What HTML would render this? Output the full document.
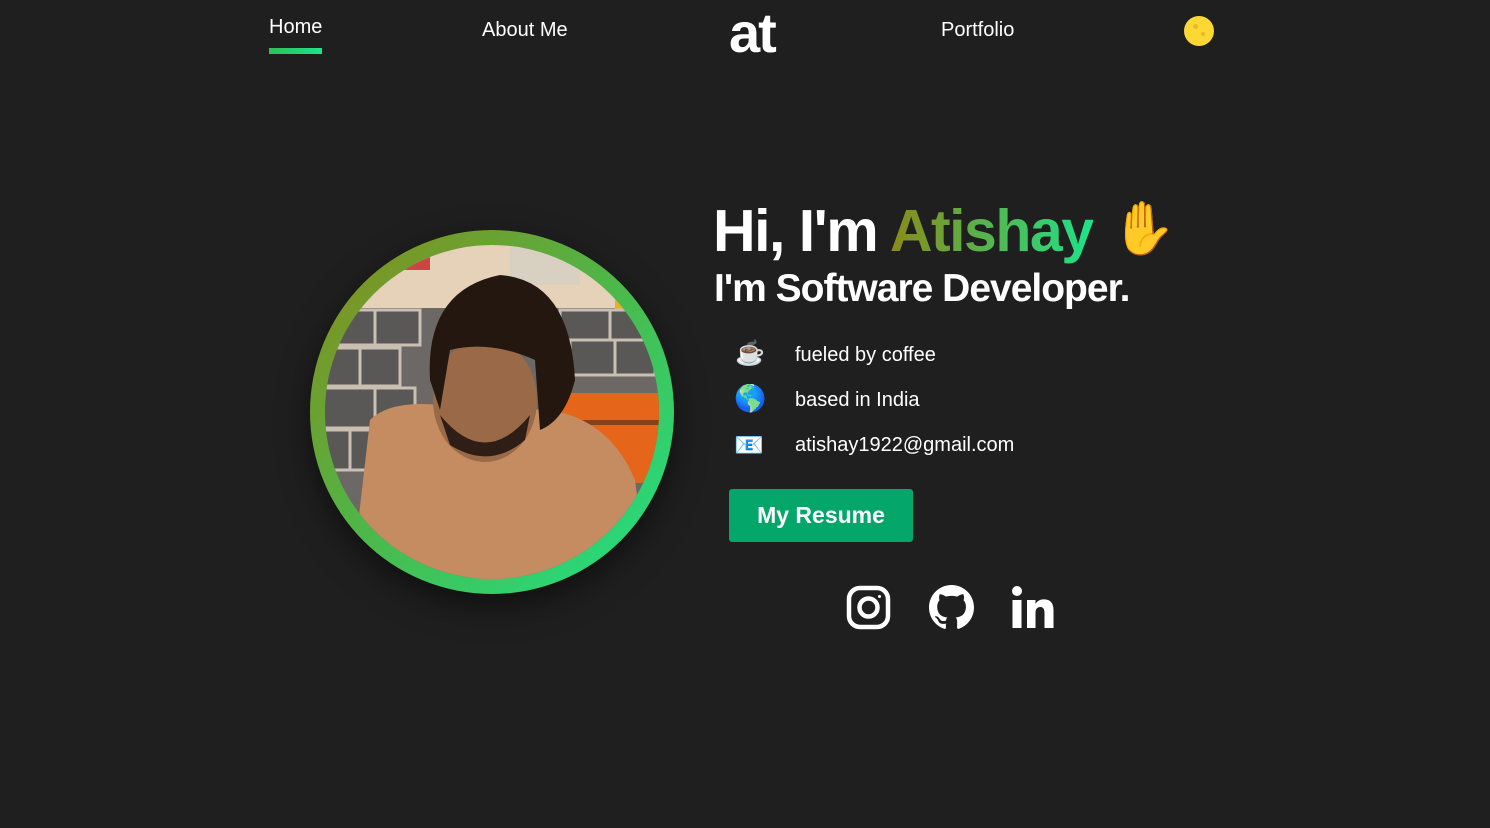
<!DOCTYPE html>
<html><head><meta charset="utf-8"><style>
*{margin:0;padding:0;box-sizing:border-box}
body{width:1490px;height:828px;background:#1f1f1f;font-family:"Liberation Sans",Roboto,sans-serif;color:#fff;position:relative;overflow:hidden}
.a{position:absolute;white-space:nowrap}
.nav{font-size:20px}
</style></head><body>
<div class="a nav" style="left:269px;top:16px">Home</div>
<div class="a" style="left:269px;top:48px;width:53px;height:6px;background:linear-gradient(90deg,#2fbf5a,#1de38a)"></div>
<div class="a nav" style="left:482px;top:19px">About Me</div>
<div class="a" style="left:729px;top:3px;font-size:56px;font-weight:bold;letter-spacing:-2px;line-height:60px">at</div>
<div class="a nav" style="left:941px;top:19px">Portfolio</div>
<div class="a" style="left:1184px;top:16px;width:30px;height:30px;border-radius:50%;background:#fdd835"><div style="position:absolute;left:9px;top:8px;width:5px;height:5px;border-radius:50%;background:#e8b923"></div><div style="position:absolute;left:17px;top:16px;width:4px;height:4px;border-radius:50%;background:#e8b923"></div></div>

<svg class="a" style="left:300px;top:220px;filter:drop-shadow(0 12px 16px rgba(0,0,0,.5))" width="384" height="384" viewBox="-10 -10 384 384">
<defs>
<linearGradient id="r" x1="0" y1="0" x2="1" y2="1"><stop offset="0" stop-color="#8a8a18"/><stop offset=".5" stop-color="#4cb84a"/><stop offset="1" stop-color="#1de38a"/></linearGradient>
<clipPath id="c"><circle cx="182" cy="182" r="167"/></clipPath>
</defs>
<circle cx="182" cy="182" r="182" fill="url(#r)"/>
<g clip-path="url(#c)">
<rect width="364" height="364" fill="#6b6866"/>
<rect width="364" height="78" fill="#e6d2b8"/>
<rect x="60" y="15" width="60" height="25" fill="#c44"/>
<rect x="200" y="15" width="70" height="40" fill="#d8d0c0"/>
<rect x="305" y="70" width="15" height="20" fill="#e8b020"/>
<g fill="#5a5856" stroke="#c9bfb3" stroke-width="3">
<rect x="10" y="80" width="55" height="35"/><rect x="65" y="80" width="45" height="35"/><rect x="250" y="80" width="50" height="35"/><rect x="300" y="80" width="50" height="35"/>
<rect x="10" y="118" width="40" height="38"/><rect x="50" y="118" width="40" height="38"/><rect x="260" y="110" width="45" height="35"/><rect x="305" y="110" width="40" height="35"/>
<rect x="10" y="158" width="55" height="40"/><rect x="65" y="158" width="40" height="40"/>
<rect x="10" y="200" width="30" height="40"/><rect x="40" y="200" width="30" height="40"/>
</g>
<rect x="250" y="163" width="120" height="90" fill="#e5661b"/>
<rect x="250" y="190" width="120" height="5" fill="#8a4015"/>
<path d="M60 190 Q80 170 130 175 L240 180 Q300 190 325 250 L340 364 L40 364 Z" fill="#c48c60"/>
<ellipse cx="175" cy="170" rx="52" ry="62" fill="#9a6a48"/>
<path d="M120 150 Q115 60 190 45 Q260 50 265 150 Q255 190 230 200 L225 130 Q180 110 140 120 L130 180 Z" fill="#24170f"/>
<path d="M130 185 Q175 240 220 185 L215 210 Q180 240 140 215 Z" fill="#2e1e16"/>
</g>
</svg>

<div class="a" style="left:713px;top:192px;font-size:59px;font-weight:bold;line-height:78px;letter-spacing:-1.5px">Hi, I'm <span style="background:linear-gradient(90deg,#8a8a18,#1de38a);-webkit-background-clip:text;background-clip:text;color:transparent">Atishay</span></div>
<div class="a" style="left:1111px;top:194px;font-size:52px;line-height:70px">✋</div>
<div class="a" style="left:714px;top:267px;font-size:39px;font-weight:bold;letter-spacing:-1px">I'm Software Developer.</div>

<div class="a" style="left:735px;top:339px;font-size:24px">☕</div>
<div class="a" style="left:795px;top:344px;font-size:20px">fueled by coffee</div>
<div class="a" style="left:734px;top:383px;font-size:26px">🌎</div>
<div class="a" style="left:795px;top:389px;font-size:20px">based in India</div>
<div class="a" style="left:734px;top:431px;font-size:24px">📧</div>
<div class="a" style="left:795px;top:434px;font-size:20px">atishay1922@gmail.com</div>

<div class="a" style="left:729px;top:489px;width:184px;height:53px;background:#04a66a;border-radius:3px;font-size:23px;font-weight:bold;text-align:center;line-height:53px">My Resume</div>

<svg class="a" style="left:846px;top:585px" width="45" height="45" viewBox="0 0 45 45" fill="none" stroke="#fff" stroke-width="4.5"><rect x="3" y="3" width="39" height="39" rx="11"/><circle cx="22.5" cy="22.5" r="9"/><circle cx="33.5" cy="11.5" r="1.5" fill="#fff" stroke="none"/></svg>
<svg class="a" style="left:929px;top:585px" width="45" height="45" viewBox="0 0 16 16"><path fill="#fff" d="M8 0C3.580 0 0 3.58 0 8c0 3.54 2.29 6.53 5.47 7.59.4.07.55-.17.55-.38 0-.19-.01-.82-.01-1.49-2.010.37-2.53-.49-2.69-.94-.09-.23-.48-.94-.82-1.13-.28-.15-.68-.52-.01-.53.63-.01 1.08.58 1.23.82.72 1.21 1.87.87 2.33.66.07-.52.28-.87.51-1.07-1.78-.2-3.64-.89-3.64-3.95 0-.87.31-1.59.82-2.15-.08-.2-.36-1.02.08-2.12 0 0 .67-.21 2.2.82.64-.18 1.32-.27 2-.27.68 0 1.36.09 2 .27 1.53-1.04 2.2-.82 2.2-.82.44 1.1.16 1.92.08 2.12.51.56.82 1.27.82 2.15 0 3.07-1.87 3.75-3.65 3.95.29.25.54.73.54 1.48 0 1.07-.01 1.93-.01 2.2 0 .21.15.46.55.38A8.013 8.013 0 0016 8c0-4.42-3.58-8-8-8z"/></svg>
<svg class="a" style="left:1011px;top:585px" width="46" height="45" viewBox="0 0 46 45" fill="#fff"><circle cx="6" cy="6" r="5"/><rect x="1.5" y="15" width="9" height="28"/><path d="M16 15h8.5v4c2-3.5 5-4.6 8.5-4.6 7 0 9.5 4.5 9.5 11V43h-9V28c0-3.5-1-6-4.2-6-3.5 0-4.8 2.6-4.8 6V43H16z"/></svg>
</body></html>
